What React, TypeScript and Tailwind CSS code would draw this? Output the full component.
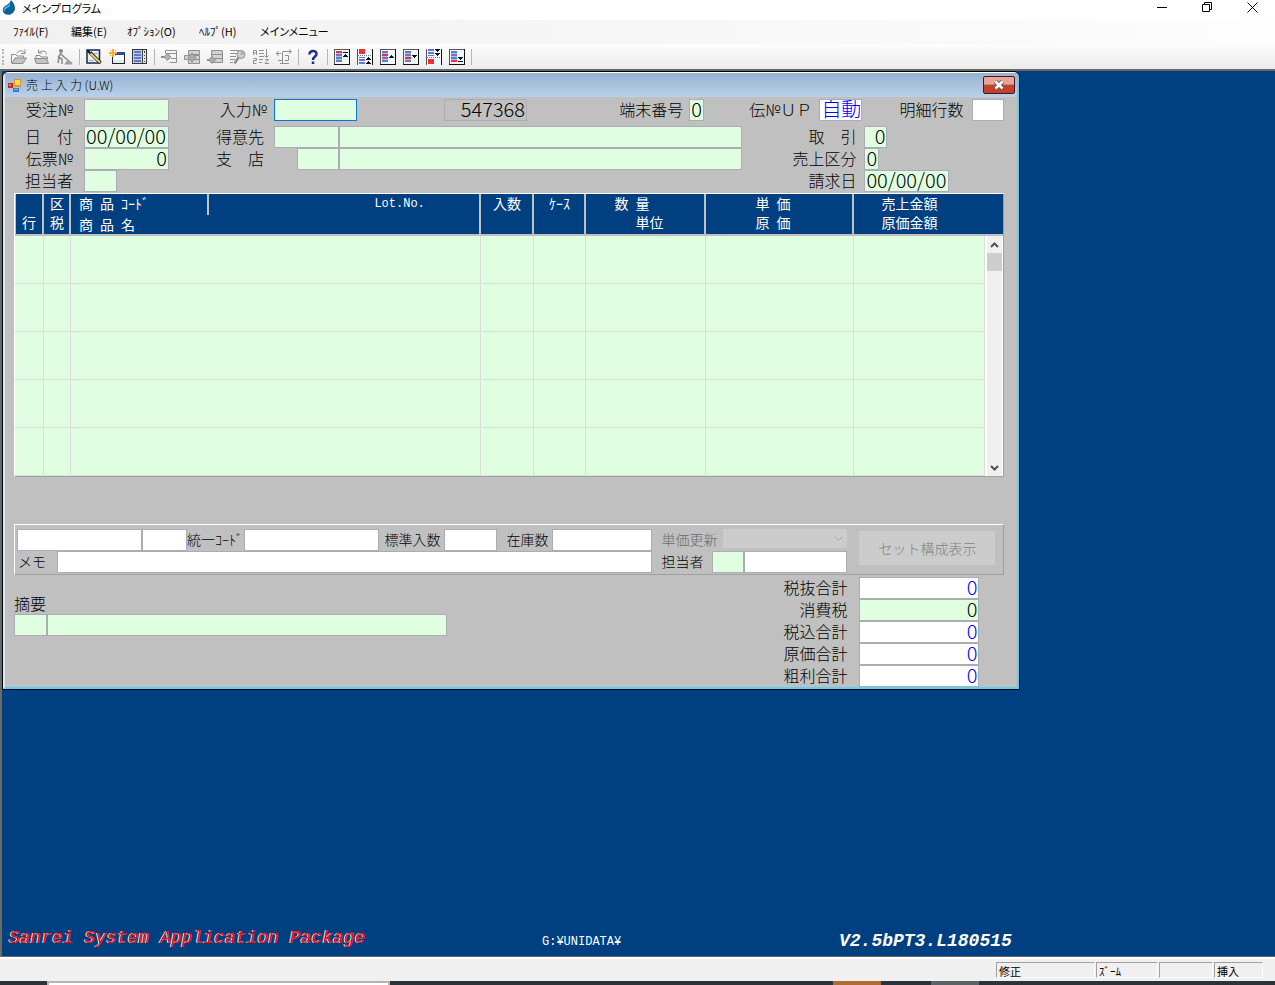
import type { ReactNode } from "react";
import clsx from "clsx";

type FieldProps = {
  id: string;
  label?: string;
  value?: string;
  className?: string;
};

// Plain sunken text box, colour and width come from className
const Field = ({ id, label, value = "", className }: FieldProps) => (
  <input
    id={id}
    aria-label={label}
    type="text"
    defaultValue={value}
    className={clsx(
      "h-[22px] min-w-0 rounded-none border border-[#abadb3] px-px pb-[3px] text-xl leading-5 outline-none",
      className,
    )}
  />
);

type LabelProps = {
  htmlFor: string;
  children: ReactNode;
  className?: string;
};

const Label = ({ htmlFor, children, className }: LabelProps) => (
  <label htmlFor={htmlFor} className={clsx("shrink-0 whitespace-nowrap", className)}>
    {children}
  </label>
);

const Svg = ({ children }: { children: ReactNode }) => (
  <svg width="16" height="16" viewBox="0 0 16 16" shapeRendering="crispEdges" fill="none">
    {children}
  </svg>
);

/* TOOLBAR ICONS */

const OpenIcon = () => (
  <svg width="16" height="16" viewBox="0 0 16 16" fill="none" stroke="#8c8c8c">
    <path d="M.5 14V5.500h4L6 7h6.500v2" />
    <path d="M1 14.500 4 9h11.500L12 14.500z" fill="#c4c4c4" />
    <path d="M6 4.500C7 1 11 1 13.500 3.500M14 .5v4h-4" />
  </svg>
);

const CloseFolderIcon = () => (
  <svg width="16" height="16" viewBox="0 0 16 16" fill="none" stroke="#8c8c8c">
    <path d="M2 14V6.500h4L7 8h6.500v2" />
    <path d="M.5 9.500h12l2 5H2.500z" fill="#c4c4c4" />
    <path d="M12.500 5.500C13 2 8 1 5 3.500M4.500.5v3.500H8" />
  </svg>
);

const WorkerIcon = () => (
  <svg width="16" height="16" viewBox="0 0 16 16" fill="none" stroke="#888" strokeWidth="1.500">
    <circle cx="4" cy="2" r="2" fill="#888" stroke="none" />
    <path d="M4 4 1.500 8l3.500 2v5M2 8.500 1 14M4 5l3 3 5 4" />
    <path d="M7.500 15.500c1-3 3-5 4.500-4s3.500 1 3.500 4z" fill="#a0a0a0" stroke="none" />
  </svg>
);

const EditIcon = () => (
  <svg width="16" height="16" viewBox="0 0 16 16" fill="none">
    <path d="M1 1h12.500v13H1z" fill="#e4f1fb" stroke="#1b2450" strokeWidth="1.500" />
    <path d="M3 11.500h5M8 4.500h4" stroke="#8fb4d8" />
    <path d="m4 3.500 10.500 10.500" stroke="#222" strokeWidth="3.500" />
    <path d="m4.500 4.500 9.500 9" stroke="#f0cf62" strokeWidth="2" />
    <path d="m1.500 1.500 2.500 2.500" stroke="#111" strokeWidth="2" />
  </svg>
);

const NewIcon = () => (
  <Svg>
    <path d="M3 3h13v12H3z" fill="#222" />
    <path d="M4 4h11v10H4z" fill="#fff" />
    <path d="M6 3h10v3H6z" fill="#2f4a9c" />
    <path d="M4 11h11v3H4z" fill="#dbeef7" />
    <path d="M3 0h2v8H3zM0 3h8v2H0zM1 1h1v1H1zM6 1h1v1H6zM1 6h1v1H1zM6 6h1v1H6z" fill="#f5b02e" />
  </Svg>
);

const ListIcon = () => (
  <Svg>
    <path d="M0 0h15v15H0z" fill="#333" />
    <path d="M1 1h13v13H1z" fill="#e6e6ea" />
    <path d="M1 1h9v13H1z" fill="#c3cdf2" />
    <path d="M2 2h7v2H2zM2 5h7v2H2zM2 8h7v2H2zM2 11h7v2H2z" fill="#6476c4" />
    <path d="M10 1h1v13h-1zM12 2h1v2h-1zM12 6h1v1h-1zM12 9h1v1h-1zM12 12h1v1h-1z" fill="#444" />
  </Svg>
);

const GREY_SHAPES = [
  <>
    <path d="M4.500 4V1.500h11v12h-7M4.500 4.500h11M10 9.500h5" />
    <path d="M6.500 4.500 10 8l-3.500 3.500L3 8z" fill="#b4b4b4" />
    <path d="M0 8h3" strokeWidth="2" />
  </>,
  <>
    <path d="M4.500 1.500h11v4h-11zM.5 6.500h15v4H.500zM4.500 10.500h11v4h-11z" fill="#d2d2d2" />
    <path d="M8 4l4 4.500L8 13 4 8.500z" fill="#aaa" />
  </>,
  <>
    <path d="M4.500 1.500h11v4h-11zM4.500 5.500h11v4h-11zM4.500 9.500h11v4h-11z" fill="#d2d2d2" />
    <path d="M5 7.500 8.500 11 5 14.500 1.500 11z" fill="#aaa" />
    <path d="M0 11h2" strokeWidth="2" />
  </>,
  <>
    <path d="M0 1.500h9M0 4.500h7M0 7.500h6M0 10.500h5M0 13.500h3" />
    <circle cx="11" cy="5.500" r="4" fill="#d0d0d0" />
    <circle cx="12" cy="4.500" r="1" fill="#fff" />
    <path d="m8.500 8.500-4 6" strokeWidth="2.500" />
  </>,
  <>
    <path d="M.5 6V1.500h3V6M.5 4h3M.5 9.500h3v2l-3 0v3h3M6 1.500h5M6 4.500h5M6 7.500h5M6 10.500h4M6 13.500h3" />
    <path d="M13.500 0v8M11.500 6.500l2 2 2-2M12 10.500h3.500L12 14.500h4" />
  </>,
  <>
    <path d="M0 4.500h5M2.500 2 .5 4.500l2 2.500M6.500 3v11.500M6.500 2.500H15M4 14.500h9M9 6.500h3.500v5H9M13 .5l2.500 2-2.500 2M2 11.500h4" />
  </>,
];

const GreyIcon = ({ index }: { index: number }) => (
  <svg width="16" height="16" viewBox="0 0 16 16" fill="none" stroke="#8f8f8f">
    {GREY_SHAPES[index]}
  </svg>
);

type RecordIconProps = {
  red: number;
  arrow: string;
  split?: boolean;
};

// Record navigation: a list with one red line and an arrow to its right
const RecordIcon = ({ red, arrow, split }: RecordIconProps) => (
  <Svg>
    {split ? (
      <>
        <path d="M0 0h16v16H0z" fill="#eef8fc" />
        <path d="M0 0h1v16H0z" fill="#555" />
        <path d="M15 0h1v16h-1z" fill="#111" />
        <path d={red === 0 ? "M2 0h6v5H2z" : "M2 10h6v5H2z"} fill="#f03038" />
        <path
          d={red === 0 ? "M2 8h6v1H2zM2 10h6v2H2zM2 13h6v2H2z" : "M2 0h6v2H2zM2 3h6v2H2zM2 6h6v1H2z"}
          fill="#6878c8"
        />
        <path d={red === 0 ? "M1 6.500h14" : "M1 8.500h14"} stroke="#777" strokeDasharray="1 1" />
      </>
    ) : (
      <>
        <path d="M0 0h16v16H0z" fill="#111" />
        <path d="M0 0h15v15H0z" fill="#555" />
        <path d="M1 1h14v14H1z" fill="#eef8fc" />
        <path d="M2 2h6v11H2z" fill="#b4c0ea" />
        {[2, 5, 8, 11].map((y) => (
          <path key={y} d={`M2 ${y}h6v2H2z`} fill={y === red ? "#f03038" : "#6878c8"} />
        ))}
      </>
    )}
    <path d={arrow} fill="#111" />
  </Svg>
);

const RECORDS = [
  { name: "先頭", red: 2, arrow: "M9 3h5v1H9zM11 5h1v1h1v1h1v1H9V7h1V6h1z" },
  { name: "前ページ", red: 0, split: true, arrow: "M11 8h1v1h1v1h1v1H9v-1h1V9h1zM11 12h1v1h1v1h1v1H9v-1h1v-1h1z" },
  { name: "前", red: 5, arrow: "M11 6h1v1h1v1h1v1H9V8h1V7h1z" },
  { name: "次", red: 8, arrow: "M9 6h5v1h-1v1h-1v1h-1V8h-1V7H9z" },
  { name: "次ページ", red: 1, split: true, arrow: "M9 0h5v1h-1v1h-1v1h-1V2h-1V1H9zM9 4h5v1h-1v1h-1v1h-1V6h-1V5H9z" },
  { name: "最終", red: 11, arrow: "M9 8h5v1h-1v1h-1v1h-1v-1h-1V9H9zM9 12h5v1H9z" },
];

const ToolButton = ({ name, children }: { name: string; children: ReactNode }) => (
  <button type="button" aria-label={name} className="flex h-full w-[23px] items-center justify-center">
    {children}
  </button>
);

const Separator = () => (
  <div className="flex h-4 w-[6px] justify-center">
    <div className="w-px bg-[#b5b5b5]" />
  </div>
);

const MENU = [
  { text: "ﾌｧｲﾙ(F)", width: "w-[58px]" },
  { text: "編集(E)", width: "w-[56px]" },
  { text: "ｵﾌﾟｼｮﾝ(O)", width: "w-[72px]" },
  { text: "ﾍﾙﾌﾟ(H)", width: "w-[61px]" },
  { text: "メインメニュー", width: "w-[90px]" },
];

const TOTALS = [
  { id: "zeinuki", label: "税抜合計", style: "bg-white text-[#0000ff]" },
  { id: "shohizei", label: "消費税", style: "bg-[#e0ffe0]" },
  { id: "zeikomi", label: "税込合計", style: "bg-white text-[#0000ff]" },
  { id: "genka", label: "原価合計", style: "bg-white text-[#0000ff]" },
  { id: "arari", label: "粗利合計", style: "bg-white text-[#0000ff]" },
];

const STATUS = [
  { text: "修正", width: "w-[99px]" },
  { text: "ｽﾞｰﾑ", width: "w-[62px]" },
  { text: "", width: "w-[54px]" },
  { text: "挿入", width: "w-[49px]" },
];

const TH = "h-[41px] border-r-2 border-b-2 border-[#c0c0c0] p-0 align-top font-normal";

const HeaderForm = () => (
  <div className="flex flex-col">
    <div className="mb-[5px] flex items-start">
      <Label htmlFor="juchu" className="mr-[11px] w-[59px] text-right">受注№</Label>
      <Field id="juchu" className="w-[85px] bg-[#e0ffe0]" />
      <Label htmlFor="nyuryoku" className="mr-[7px] w-[98px] text-right">入力№</Label>
      <Field id="nyuryoku" className="w-[83px] border-[#0078d7]! bg-[#e0ffe0]" />
      <Field id="seq" label="連番" value="547368" className="ml-[87px] w-[83px] bg-[#c0c0c0] text-right" />
      <Label htmlFor="tanmatsu" className="mr-[6px] ml-auto">端末番号</Label>
      <Field id="tanmatsu" value="0" className="w-[15px] bg-[#e0ffe0]" />
      <Label htmlFor="denup" className="mr-[7px] ml-[45px]">伝№ＵＰ</Label>
      <Field id="denup" value="自動" className="w-[43px] bg-white text-right text-[#0000ff]" />
      <Label htmlFor="meisai" className="mr-[9px] ml-[37px]">明細行数</Label>
      <Field id="meisai" className="w-[32px] bg-white" />
    </div>

    <div className="flex items-start">
      <Label htmlFor="hizuke" className="mr-[11px] w-[59px] text-right">日　付</Label>
      <Field id="hizuke" value="00/00/00" className="w-[85px] bg-[#e0ffe0]" />
      <Label htmlFor="tokui" className="mr-[10px] w-[95px] text-right">得意先</Label>
      <Field id="tokui" className="w-[65px] bg-[#e0ffe0]" />
      <Field id="tokuiname" label="得意先名" className="flex-1 bg-[#e0ffe0]" />
      <Label htmlFor="torihiki" className="mr-[8px] w-[114px] text-right">取　引</Label>
      <div className="flex w-[140px]">
        <Field id="torihiki" value="0" className="w-[23px] bg-[#e0ffe0] text-right" />
      </div>
    </div>

    <div className="flex items-start">
      <Label htmlFor="denpyo" className="mr-[11px] w-[59px] text-right">伝票№</Label>
      <Field id="denpyo" value="0" className="w-[85px] bg-[#e0ffe0] text-right" />
      <Label htmlFor="shiten" className="mr-[33px] w-[95px] text-right">支　店</Label>
      <Field id="shiten" className="w-[42px] bg-[#e0ffe0]" />
      <Field id="shitenname" label="支店名" className="flex-1 bg-[#e0ffe0]" />
      <Label htmlFor="kubun" className="mr-[8px] w-[114px] text-right">売上区分</Label>
      <div className="flex w-[140px]">
        <Field id="kubun" value="0" className="w-[15px] bg-[#e0ffe0]" />
      </div>
    </div>

    <div className="flex items-start">
      <Label htmlFor="tanto" className="mr-[11px] w-[59px] text-right">担当者</Label>
      <Field id="tanto" className="w-[33px] bg-[#e0ffe0]" />
      <Label htmlFor="seikyu" className="mr-[8px] ml-auto">請求日</Label>
      <div className="flex w-[140px]">
        <Field id="seikyu" value="00/00/00" className="w-[85px] bg-[#e0ffe0]" />
      </div>
    </div>
  </div>
);

const DetailTable = () => (
  <div className="mt-px border border-t-white border-r-[#a0a0a0] border-b-[#a0a0a0] border-l-white">
    <table className="w-full table-fixed border-separate border-spacing-0 bg-[#e0ffe0]">
      <colgroup>
        <col className="w-[29px]" />
        <col className="w-[27px]" />
        <col />
        <col className="w-[53px]" />
        <col className="w-[52px]" />
        <col className="w-[120px]" />
        <col className="w-[148px]" />
        <col className="w-[131px]" />
        <col className="w-[18px]" />
      </colgroup>
      <thead>
        <tr className="bg-[#004080] text-left text-sm leading-[19px] text-white">
          <th className={clsx(TH, "border-l pt-[19px] pl-[6px]")}>行</th>
          <th className={clsx(TH, "pl-[6px]")}>区<br />税</th>
          <th className={TH}>
            <div className="flex">
              <div className="w-[138px] border-r-2 border-[#c0c0c0] pl-2">商&#8194;品&#8194;ｺｰﾄﾞ</div>
              <div className="ml-auto w-[105px] font-['Liberation_Mono',monospace] text-xs leading-[21px]">Lot.No.</div>
            </div>
            <div className="pl-2">商&#8194;品&#8194;名</div>
          </th>
          <th className={clsx(TH, "text-center")}>入数</th>
          <th className={clsx(TH, "text-center")}>ｹｰｽ</th>
          <th className={TH}>
            <div className="pl-7">数&#8194;量</div>
            <div className="pl-[49px]">単位</div>
          </th>
          <th className={clsx(TH, "pl-[49px]")}>単&#8194;価<br />原&#8194;価</th>
          <th colSpan={2} className="border-b-2 border-[#c0c0c0] p-0 pl-[27px] align-top font-normal">売上金額<br />原価金額</th>
        </tr>
      </thead>
      <tbody>
        {[1, 2, 3, 4, 5].map((row) => (
          <tr key={row}>
            {[1, 2, 3, 4, 5, 6, 7, 8].map((col) => (
              <td key={col} className="h-12 border-r border-b border-[#dcdcdc] p-0" />
            ))}
            {row === 1 && (
              <td rowSpan={5} className="border-r border-l-2 border-white bg-[#f0f0f0] p-0 align-top">
                <div className="flex h-60 flex-col items-center">
                  <button type="button" aria-label="上へ" className="flex h-[17px] w-full items-center justify-center">
                    <svg width="9" height="6" viewBox="0 0 9 6" fill="none" stroke="#505050" strokeWidth="2">
                      <path d="m1 5 3.500-3.500L8 5" />
                    </svg>
                  </button>
                  <div className="h-[18px] w-full bg-[#cdcdcd]" />
                  <button type="button" aria-label="下へ" className="mt-auto flex h-[17px] w-full items-center justify-center">
                    <svg width="9" height="6" viewBox="0 0 9 6" fill="none" stroke="#505050" strokeWidth="2">
                      <path d="m1 1 3.500 3.500L8 1" />
                    </svg>
                  </button>
                </div>
              </td>
            )}
          </tr>
        ))}
      </tbody>
    </table>
  </div>
);

const ItemPanel = () => (
  <div className="mt-[47px] flex border border-t-white border-r-[#a0a0a0] border-b-[#a0a0a0] border-l-white pt-1 pr-2 pb-px pl-[2px] text-sm">
    <div className="flex min-w-0 flex-1 flex-col">
      <div className="flex items-start">
        <Field id="item" label="商品" className="w-[125px] bg-white" />
        <Field id="itemsub" label="枝番" className="w-[45px] bg-white" />
        <Label htmlFor="toitsu" className="w-[57px]">統一ｺｰﾄﾞ</Label>
        <Field id="toitsu" className="flex-1 bg-white" />
        <Label htmlFor="hyojun" className="mr-1 ml-[5px]">標準入数</Label>
        <Field id="hyojun" className="w-[53px] bg-white" />
        <Label htmlFor="zaiko" className="mr-1 ml-[9px]">在庫数</Label>
        <Field id="zaiko" className="w-[100px] bg-white" />
      </div>
      <div className="flex items-start">
        <Label htmlFor="memo" className="w-[40px] pl-px">メモ</Label>
        <Field id="memo" className="flex-1 bg-white" />
      </div>
    </div>

    <div className="ml-[9px] flex w-[186px] shrink-0 flex-col">
      <div className="flex h-[22px] items-start">
        <Label htmlFor="tanka" className="mr-[6px] text-[#6d6d6d]">単価更新</Label>
        <div className="relative flex-1">
          <select id="tanka" disabled className="block h-[19px] w-full appearance-none bg-[#cccccc]" />
          <svg width="9" height="6" viewBox="0 0 9 6" fill="none" stroke="#a8a8a8" className="absolute top-[7px] right-1">
            <path d="m.5.5 4 4 4-4" />
          </svg>
        </div>
      </div>
      <div className="flex items-start">
        <Label htmlFor="tanto2" className="w-[51px]">担当者</Label>
        <Field id="tanto2" className="w-[32px] bg-[#e0ffe0]" />
        <Field id="tantoname" label="担当者名" className="flex-1 bg-white" />
      </div>
    </div>

    <button type="button" disabled className="mt-[2px] ml-3 h-[34px] w-[136px] shrink-0 bg-[#cccccc] text-[#838383]">
      セット構成表示
    </button>
  </div>
);

const SalesWindow = () => (
  <section className="w-4/5 rounded-t-md border border-black bg-[#c0c0c0]">
    <div className="rounded-t-md border-2 border-t border-t-white border-r-[#5cd0ee] border-b-[#5cd0ee] border-l-[#dbe9f7]">
      <header className="flex h-6 items-center bg-linear-to-b from-[#98b2d0] to-[#b9d1ea] pr-[2px] pl-[3px]">
        <svg width="13" height="13" viewBox="0 0 13 13" className="mr-[5px]">
          <path d="M0 4h5v5H0z" fill="#c22a1c" />
          <path d="M1 5h2v2H1z" fill="#f08070" />
          <path d="M6 0h7v8H6z" fill="#d99a1c" />
          <path d="M7 1h5v5H7z" fill="#ffd95c" />
          <path d="M5 9h6v4H5z" fill="#3b74dc" />
          <path d="M6 10h4v1H6z" fill="#8fb4f4" />
        </svg>
        <h2 className="text-xs">売&nbsp;上&nbsp;入&nbsp;力&nbsp;(U.W)</h2>
        <button
          type="button"
          aria-label="閉じる"
          className="ml-auto flex h-[18px] w-8 items-center justify-center rounded-xs border border-[#4a1420] bg-linear-to-b from-[#e8a598] from-45% to-[#c0432c] to-50%"
        >
          <svg width="12" height="10" viewBox="0 0 12 10" fill="none">
            <path d="m2.500 1.500 7 7M9.500 1.500l-7 7" stroke="#5a5a68" strokeWidth="4.500" />
            <path d="m2.500 1.500 7 7M9.500 1.500l-7 7" stroke="#fff" strokeWidth="2.500" />
          </svg>
        </button>
      </header>

      <div className="pt-[2px] pr-[13px] pl-[9px] text-base leading-5">
        <HeaderForm />
        <DetailTable />
        <ItemPanel />

        <div className="mt-[2px] flex items-start justify-between">
          <div className="mt-[15px] flex flex-col">
            <Label htmlFor="tekiyo" className="leading-[22px]">摘要</Label>
            <div className="flex">
              <Field id="tekiyo" className="w-[33px] bg-[#e0ffe0]" />
              <Field id="tekiyoname" label="摘要名" className="w-[400px] bg-[#e0ffe0]" />
            </div>
          </div>

          <div className="mr-[25px] flex flex-col">
            {TOTALS.map((total) => (
              <div key={total.id} className="flex items-start justify-end">
                <Label htmlFor={total.id} className="mr-3">{total.label}</Label>
                <Field id={total.id} value="0" className={clsx("w-[120px] text-right", total.style)} />
              </div>
            ))}
          </div>
        </div>
      </div>
    </div>
  </section>
);

const App = () => {
  return (
    <div className="flex min-h-screen flex-col bg-[#f0f0f0] font-['Noto_Sans_CJK_JP',sans-serif] font-light text-black">
      {/* TITLE BAR */}
      <header className="flex h-5 items-start bg-white">
        <svg width="14" height="16" viewBox="0 0 14 16" className="ml-[2px]">
          <path d="M9 0c3 3 4 6 4 9-1 5-6 7-10 5C0 12 0 8 3 6c3-2 5-3 6-6z" fill="#0d6296" />
          <path d="M8 3c1 3-1 4-3 5s-3 3-2 4C0 9 3 7 5 6s3-2 3-3z" fill="#59b4de" />
        </svg>
        <h1 className="ml-[6px] text-[11px] leading-[17px] font-normal [font-feature-settings:'palt']">メインプログラム</h1>
        <div className="ml-auto flex">
          <button type="button" aria-label="最小化" className="flex h-[15px] w-[45px] items-center justify-center">
            <svg width="11" height="11" viewBox="0 0 11 11" stroke="#000"><path d="M0 5.500h10" /></svg>
          </button>
          <button type="button" aria-label="元に戻す" className="flex h-[15px] w-[45px] items-center justify-center">
            <svg width="11" height="11" viewBox="0 0 11 11" fill="none" stroke="#000">
              <path d="M.5 2.500h7v7h-7zM2.500 2.500v-2h7v7h-2" />
            </svg>
          </button>
          <button type="button" aria-label="終了" className="flex h-[15px] w-[45px] items-center justify-center">
            <svg width="11" height="11" viewBox="0 0 11 11" stroke="#000"><path d="m.5.5 10 10M10.500.5l-10 10" /></svg>
          </button>
        </div>
      </header>

      {/* MENU */}
      <nav className="flex h-6 items-center bg-linear-to-r from-[#f0f0f0] to-[#fdfdfd] pb-[2px] pl-[13px]">
        {MENU.map((item) => (
          <button
            key={item.text}
            type="button"
            className={clsx("text-left text-[11px] font-normal whitespace-nowrap [font-feature-settings:'palt']", item.width)}
          >
            {item.text}
          </button>
        ))}
      </nav>

      {/* TOOLBAR */}
      <div className="flex h-[25px] items-center bg-linear-to-b from-[#fdfdfd] to-[#ececec]">
        <div className="h-4 w-[7px] pl-[2px]">
          <div className="h-full border-l-2 border-dotted border-[#b5b5b5]" />
        </div>
        <ToolButton name="開く"><OpenIcon /></ToolButton>
        <ToolButton name="戻す"><CloseFolderIcon /></ToolButton>
        <ToolButton name="作業"><WorkerIcon /></ToolButton>
        <Separator />
        <ToolButton name="修正"><EditIcon /></ToolButton>
        <ToolButton name="新規"><NewIcon /></ToolButton>
        <ToolButton name="一覧"><ListIcon /></ToolButton>
        <Separator />
        {GREY_SHAPES.map((_, i) => (
          <ToolButton key={i} name={`機能${i + 1}`}><GreyIcon index={i} /></ToolButton>
        ))}
        <Separator />
        <ToolButton name="ヘルプ">
          <svg width="16" height="16" viewBox="0 0 16 16" fill="none" stroke="#1f2f80" strokeWidth="2.500">
            <path d="M4.500 5.500C4 1 12 1 11.500 5c0 2.500-3.500 2.500-3.500 6" />
            <path d="M8 12.500v2.500" />
          </svg>
        </ToolButton>
        <Separator />
        {RECORDS.map((rec) => (
          <ToolButton key={rec.name} name={rec.name}>
            <RecordIcon red={rec.red} arrow={rec.arrow} split={rec.split} />
          </ToolButton>
        ))}
        <Separator />
      </div>

      {/* WORKSPACE */}
      <main className="flex flex-1 flex-col justify-between border-t-2 border-b border-l-2 border-[#696969] bg-[#004080]">
        <SalesWindow />

        <div className="flex items-end pb-[5px] pl-[7px] font-['Liberation_Mono','Noto_Sans_CJK_JP',monospace] font-normal text-white">
          <p className="mb-[3px] w-[533px] text-lg leading-5 text-[#ff0000] italic [text-shadow:-1px_0_0_#fff]">
            Sanrei System Application Package
          </p>
          <p className="w-[297px] text-xs leading-[18px]">G:¥UNIDATA¥</p>
          <p className="text-lg leading-5 font-bold italic">V2.5bPT3.L180515</p>
        </div>
      </main>

      {/* STATUS BAR */}
      <footer>
        <div className="flex h-6 items-center justify-end border-t-2 border-white pr-[11px] text-[11px] font-normal">
          {STATUS.map((cell, i) => (
            <div
              key={i}
              className={clsx(
                "mr-px h-4 border border-t-[#a0a0a0] border-r-white border-b-white border-l-[#a0a0a0] pl-[2px] leading-4",
                cell.width,
              )}
            >
              {cell.text}
            </div>
          ))}
        </div>
        <div className="flex h-1 bg-[#2b343b]">
          <div className="ml-[47px] w-[343px] border-x-2 border-t-2 border-[#b4b4b4] bg-white" />
          <div className="ml-auto w-12 bg-[#b16a30]" />
          <div className="mr-[296px] ml-[50px] w-12 bg-[#5a6468]" />
        </div>
      </footer>
    </div>
  );
};

export default App;
